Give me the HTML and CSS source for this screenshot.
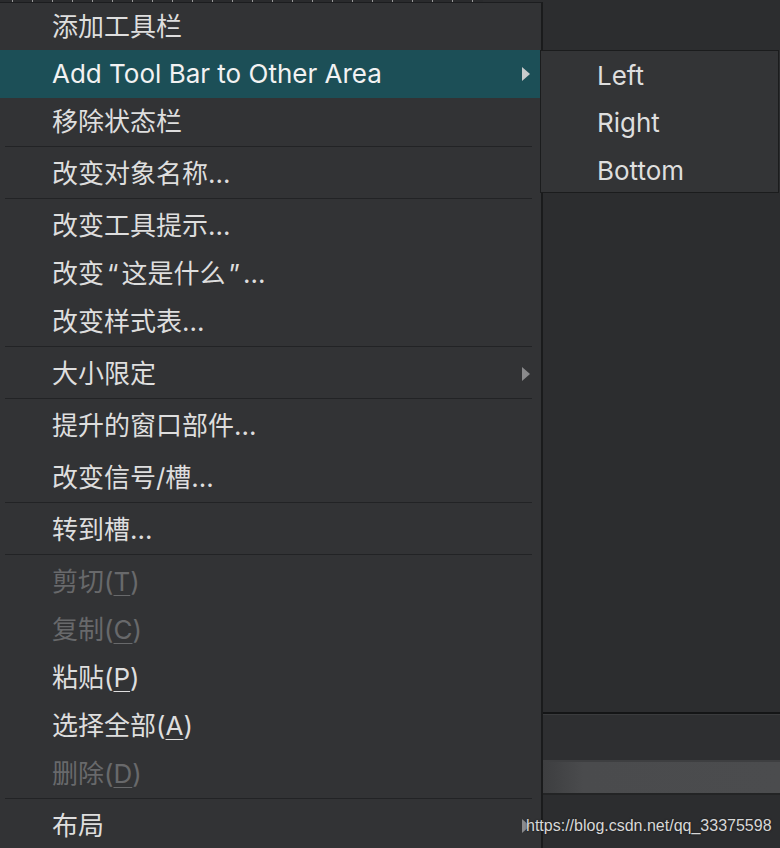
FILE: index.html
```html
<!DOCTYPE html>
<html lang="zh-CN">
<head>
<meta charset="utf-8">
<title>Context menu</title>
<link rel="stylesheet" href="styles.css">
</head>
<body>
<div class="screen">
  <div class="menu-col">
    <div class="grid-strip"></div>
    <div class="menu">
      <div class="item first">添加工具栏</div>
      <div class="item active sub">Add Tool Bar to Other Area<span class="arrow"></span></div>
      <div class="item">移除状态栏</div>
      <div class="sep"></div>
      <div class="item">改变对象名称...</div>
      <div class="sep"></div>
      <div class="item">改变工具提示...</div>
      <div class="item">改变<span class="q">“</span>这是什么<span class="q">”</span>...</div>
      <div class="item">改变样式表...</div>
      <div class="sep"></div>
      <div class="item sub">大小限定<span class="arrow"></span></div>
      <div class="sep"></div>
      <div class="item">提升的窗口部件...</div>
      <div class="sep blank"></div>
      <div class="item">改变信号/槽...</div>
      <div class="sep"></div>
      <div class="item">转到槽...</div>
      <div class="sep"></div>
      <div class="item disabled">剪切(<u>T</u>)</div>
      <div class="item disabled">复制(<u>C</u>)</div>
      <div class="item">粘贴(<u>P</u>)</div>
      <div class="item">选择全部(<u>A</u>)</div>
      <div class="item disabled">删除(<u>D</u>)</div>
      <div class="sep"></div>
      <div class="item sub">布局<span class="arrow"></span></div>
    </div>
  </div>
  <div class="form-col">
    <div class="form-area"></div>
    <div class="form-rule"></div>
    <div class="form-band"></div>
    <div class="form-bar"></div>
    <div class="form-rule thin"></div>
    <div class="form-bottom"></div>
  </div>
  <div class="submenu">
    <div class="sub-item">Left</div>
    <div class="sub-item">Right</div>
    <div class="sub-item">Bottom</div>
  </div>
  <div class="watermark">https://blog.csdn.net/qq_33375598</div>
</div>
</body>
</html>
```

FILE: styles.css
```css
* { box-sizing: border-box; }
html, body {
  margin: 0;
  padding: 0;
  background: #2c2d2f;
}
.screen {
  position: relative;
  display: flex;
  width: 780px;
  height: 848px;
  overflow: hidden;
  font-family: Inter, "Noto Sans CJK SC", sans-serif;
}
.menu-col {
  width: 543px;
  flex: none;
  display: flex;
  flex-direction: column;
}
.grid-strip {
  flex: none;
  height: 2px;
  width: 483px;
  background:
    repeating-linear-gradient(90deg, transparent 0 12px, #9a9a9a 12px 13px, transparent 13px 20px),
    #2a2b2d;
}
.menu {
  flex: 1 0 auto;
  background: #323335;
  border-top: 1px solid #1c1d1f;
  border-right: 2px solid #1a1b1c;
}
.item {
  position: relative;
  height: 48px;
  line-height: 48px;
  padding-left: 52px;
  font-size: 26px;
  color: #dedede;
  white-space: nowrap;
}
.item.first { height: 47px; line-height: 48px; }
.item.active {
  background: #1c4f57;
  color: #f2f2f2;
}
.item.disabled { color: #68696b; }
.item u {
  text-decoration-thickness: 1px;
  text-underline-offset: 4px;
}
.q {
  display: inline-block;
  padding: 0 3px;
}
.arrow {
  position: absolute;
  left: 522px;
  top: 17px;
  width: 0;
  height: 0;
  border-top: 7px solid transparent;
  border-bottom: 7px solid transparent;
  border-left: 8px solid #8a8a8c;
}
.item.active .arrow { border-left-color: #c9cbcc; }
.sep {
  height: 4px;
  margin: 0 9px 0 5px;
  border-top: 1px solid #222325;
}
.sep.blank { border-top-color: transparent; }

.form-col {
  flex: 1;
  display: flex;
  flex-direction: column;
}
.form-area {
  flex: none;
  height: 712px;
  background: #2c2d2f;
}
.form-rule {
  flex: none;
  height: 2px;
  background: #141516;
}
.form-rule.thin {
  height: 2px;
  background: #232425;
}
.form-band {
  flex: none;
  height: 46px;
  background: #2e2f31;
  border-top: 1px solid #3a3b3d;
}
.form-bar {
  flex: none;
  height: 33px;
  background: linear-gradient(90deg, #3d3e40 0, #4a4b4d 40px, #4b4c4e 100%);
  border-top: 2px solid #3e3f41;
}
.form-bottom {
  flex: 1;
  background: #2c2d2f;
}

.submenu {
  position: absolute;
  left: 540px;
  top: 50px;
  width: 239px;
  background: #333436;
  border: 1px solid #1b1c1d;
  padding: 0;
}
.sub-item {
  height: 47px;
  line-height: 50px;
  padding-left: 56px;
  font-size: 26px;
  color: #dedede;
}
.sub-item + .sub-item { line-height: 50px; }
.sub-item:last-child { height: 47px; line-height: 52px; }
.watermark {
  position: absolute;
  left: 526px;
  top: 817px;
  font-family: "Liberation Sans", Arial, sans-serif;
  font-size: 16px;
  color: #d8d8d8;
  text-shadow: 0 0 2px #1a1a1a;
}
```
